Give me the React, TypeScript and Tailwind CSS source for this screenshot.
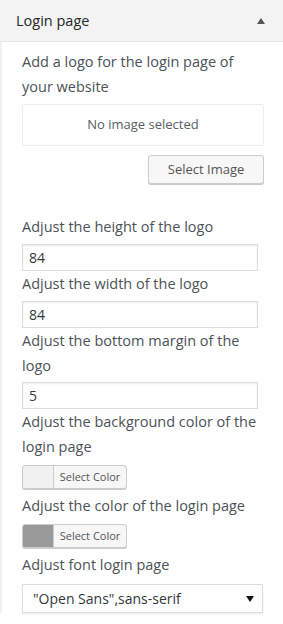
import React from "react";

const font = { fontFamily: '"Open Sans", "Noto Sans", sans-serif' };

function Label({ children }: { children: React.ReactNode }) {
  return <div className="text-[14.5px] leading-[25px] text-[#4c5258]">{children}</div>;
}

function TextInput({ value }: { value: string }) {
  return (
    <div className="mt-[5px] h-[27px] w-[236px] border border-[#ddd] bg-white px-[6px] text-[14px] leading-[25px] text-[#32373c] shadow-[inset_0_1px_2px_rgba(0,0,0,0.07)]">
      {value}
    </div>
  );
}

function ColorButton({ color }: { color: string }) {
  return (
    <div className="mt-[6px] mb-[4px] flex h-[24px] w-[105px] overflow-hidden rounded-[3px] border border-[#ccc] bg-[#f7f7f7] shadow-[0_1px_0_#ccc]">
      <div className="w-[31px] border-r border-[#ccc]" style={{ backgroundColor: color }} />
      <div className="flex flex-1 items-center justify-center text-[11px] text-[#555]">Select Color</div>
    </div>
  );
}

export default function App() {
  return (
    <div className="h-[624px] w-[283px] bg-white" style={font}>
      <div className="flex h-[42px] items-center justify-between border-b border-[#e5e5e5] bg-[#f3f3f3] pl-[16px] pr-[16px]">
        <span className="text-[14.5px] text-[#23282d]">Login page</span>
        <svg width="10" height="8" viewBox="0 0 10 8" className="mr-[1px]">
          <polygon points="5,1 9,7 1,7" fill="#555" />
        </svg>
      </div>
      <div className="border-l-2 border-[#f1f1f1] pl-[20px] pr-[19px] pt-[7px]">
        <Label>
          Add a logo for the login page of
          <br />
          your website
        </Label>
        <div className="mt-[5px] flex h-[42px] items-center justify-center rounded-[2px] border border-[#eee] text-[13px] text-[#555d66]">
          No image selected
        </div>
        <div className="mt-[9px] flex justify-end">
          <div className="flex h-[29px] w-[116px] items-center justify-center rounded-[3px] border border-[#ccc] bg-[#f7f7f7] text-[13px] text-[#555] shadow-[0_1px_0_#ccc]">
            Select Image
          </div>
        </div>
        <div className="h-[30px]" />
        <Label>Adjust the height of the logo</Label>
        <TextInput value="84" />
        <Label>Adjust the width of the logo</Label>
        <TextInput value="84" />
        <Label>
          Adjust the bottom margin of the
          <br />
          logo
        </Label>
        <div className="-mt-[1px]">
          <TextInput value="5" />
        </div>
        <Label>
          Adjust the background color of the
          <br />
          login page
        </Label>
        <ColorButton color="#f1f1f1" />
        <Label>Adjust the color of the login page</Label>
        <ColorButton color="#999999" />
        <Label>Adjust font login page</Label>
        <div className="mt-[7px] flex h-[29px] w-[241px] items-center justify-between border border-[#ddd] bg-white pl-[10px] pr-[8px] shadow-[0_1px_2px_rgba(0,0,0,0.07)]">
          <span className="text-[14px] text-[#32373c]">"Open Sans",sans-serif</span>
          <svg width="8" height="6" viewBox="0 0 8 6">
            <polygon points="0,0 8,0 4,6" fill="#111" />
          </svg>
        </div>
      </div>
    </div>
  );
}
